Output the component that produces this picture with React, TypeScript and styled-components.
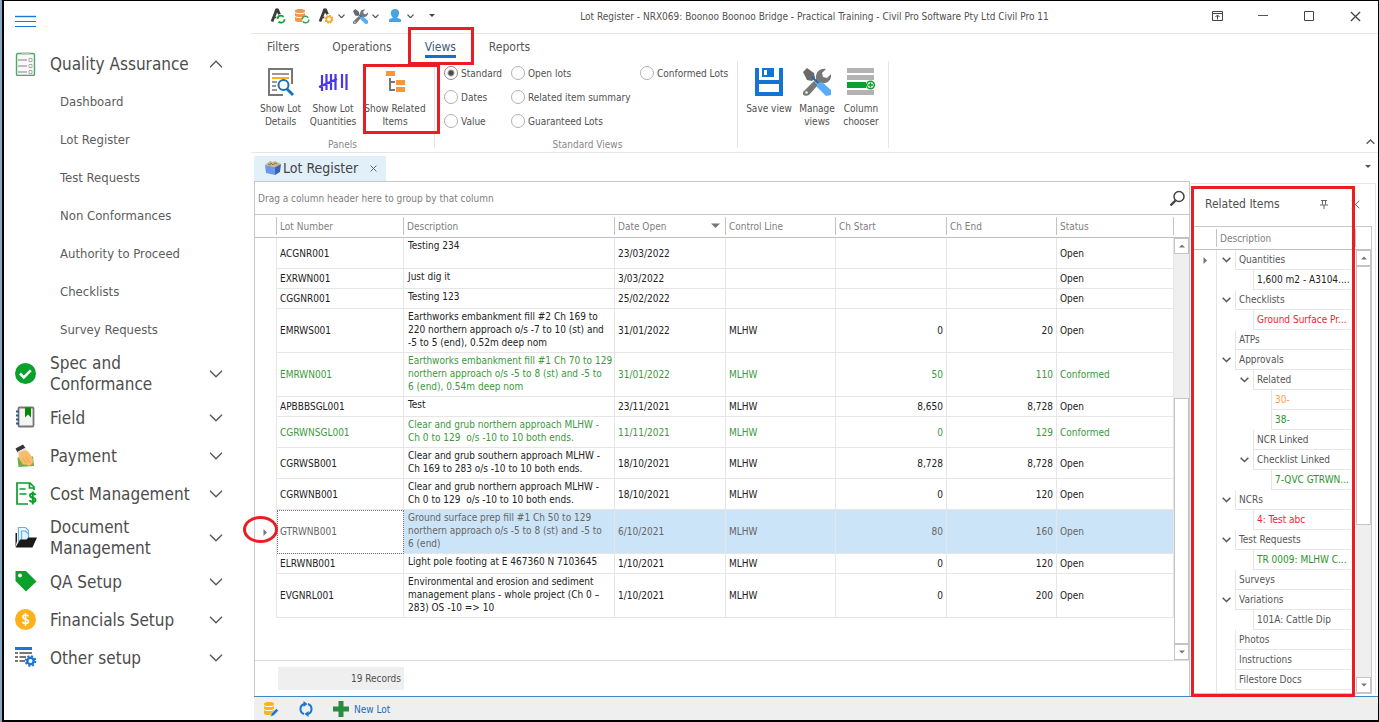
import React, { useState } from "react";
import styled, { createGlobalStyle } from "styled-components";

const GlobalStyle = createGlobalStyle`
  *, *::before, *::after { box-sizing: border-box; }
  body { margin: 0; background: #fff; }
  body, button, input, table {
    font-family: "DejaVu Sans Condensed", "DejaVu Sans", Tahoma, sans-serif;
    font-size: 10px;
    line-height: 13px;
    color: #505050;
  }
  button { background: none; border: 0; padding: 0; cursor: pointer; }
  a { color: inherit; text-decoration: none; }
  svg { display: block; flex: none; }
`;

const RED = "#eb1c24";
const LINE = "#e6e6e6";
const GREEN = "#3c993c";

/* ---------- frame ---------- */

const Frame = styled.div`
  border-left: 2px solid #86aac6;
  min-height: 100vh;
  display: flex;
`;
const Shell = styled.div`
  flex: 1;
  min-width: 0;
  display: flex;
  border: solid #000;
  border-width: 1px 1px 2px 2px;
`;
const Main = styled.main`
  flex: 1;
  min-width: 0;
  display: flex;
  flex-direction: column;
`;

/* ---------- navigation ---------- */

const Sidebar = styled.nav`
  width: 247px;
  flex: none;
  padding-top: 13px;
`;
const MenuButton = styled.button`
  display: block;
  margin-left: 11px;
  height: 16px;
  margin-bottom: 15px;
`;
const NavButton = styled.button<{ $tall?: boolean }>`
  display: flex;
  align-items: center;
  width: 100%;
  height: ${(p) => (p.$tall ? 50 : 38)}px;
  padding: 0 28px 0 10px;
  text-align: left;
  font-size: 17px;
  line-height: 21px;
  color: #4d4d4d;
`;
const NavIcon = styled.span`
  width: 36px;
  flex: none;
`;
const NavText = styled.span`
  flex: 1;
  white-space: pre-line;
`;
const NavLink = styled.a`
  display: flex;
  align-items: center;
  height: 38px;
  padding-left: 56px;
  font-size: 13px;
  line-height: 16px;
  color: #5c5c5c;
`;

/* ---------- title bar ---------- */

const TitleBar = styled.header`
  display: grid;
  grid-template-columns: 1fr auto 1fr;
  align-items: center;
  height: 33px;
  padding-bottom: 2px;
  border-bottom: 1px solid ${LINE};
`;
const QuickTools = styled.div`
  display: flex;
  align-items: center;
  gap: 8px;
  padding-left: 19px;
`;
const QuickButton = styled.button`
  display: flex;
  align-items: center;
  gap: 4px;
`;
const Title = styled.h1`
  margin: 0;
  font-size: 10px;
  font-weight: normal;
  line-height: 13px;
`;
const WindowButtons = styled.div`
  display: flex;
  justify-content: flex-end;
`;
const WindowButton = styled.button`
  width: 46px;
  height: 30px;
  display: grid;
  place-items: center;
`;

/* ---------- ribbon ---------- */

const RibbonTabs = styled.div`
  display: flex;
  height: 27px;
`;
const RibbonTab = styled.button<{ $active?: boolean }>`
  position: relative;
  padding: 5px 17px 0 16px;
  font-size: 12px;
  line-height: 16px;
  display: flex;
  flex-direction: column;
  color: ${(p) => (p.$active ? "#3c5a78" : "#555")};
  span {
    border-bottom: 3px solid ${(p) => (p.$active ? "#1a6fc0" : "transparent")};
  }
`;
const TabMarker = styled.i`
  position: absolute;
  inset: -7px -1px -4px;
  border: 3px solid ${RED};
`;
const Ribbon = styled.section`
  display: flex;
  height: 92px;
  padding-bottom: 4px;
  border-bottom: 1px solid ${LINE};
`;
const Group = styled.div<{ $wide?: boolean }>`
  display: flex;
  flex-direction: column;
  justify-content: space-between;
  padding: 0 6px 0 ${(p) => (p.$wide ? 9 : 6)}px;
  border-right: 1px solid ${LINE};
`;
const GroupBody = styled.div`
  display: flex;
  align-items: flex-start;
`;
const GroupLabel = styled.div`
  text-align: center;
  color: #888;
  height: 13px;
  margin-bottom: -3px;
`;
const BigButton = styled.button<{ $width: number }>`
  position: relative;
  width: ${(p) => p.$width}px;
  padding-top: 7px;
  display: flex;
  flex-direction: column;
  align-items: center;
  gap: 6px;
  text-align: center;
  white-space: pre;
`;
const ButtonMarker = styled.i`
  position: absolute;
  top: 3px;
  left: 1px;
  width: 77px;
  height: 70px;
  border: 3px solid ${RED};
`;
const RadioGrid = styled.div`
  display: grid;
  grid-template: repeat(3, 24px) / 67px 129px 91px;
  grid-auto-flow: column;
  align-items: center;
`;
const RadioLabel = styled.label`
  display: flex;
  align-items: center;
  gap: 3px;
  white-space: nowrap;
`;
const Radio = styled.input`
  appearance: none;
  width: 14px;
  height: 14px;
  margin: 0;
  border: 1px solid #b0b0b0;
  border-radius: 50%;
  &:checked {
    border-color: #8c8c8c;
    background: radial-gradient(circle, #4a4a4a 2px, #fff 4px);
  }
`;
const Collapse = styled.button`
  align-self: flex-end;
  margin: 0 3px 4px auto;
`;

/* ---------- document area ---------- */

const DocTabs = styled.div`
  display: flex;
  align-items: flex-end;
  justify-content: space-between;
  height: 28px;
  padding: 0 7px 0 3px;
`;
const DocTab = styled.div`
  display: flex;
  align-items: center;
  gap: 2px;
  height: 25px;
  padding: 0 9px 1px 11px;
  background: #e2f0fa;
  font-size: 14px;
  line-height: 18px;
  color: #444;
`;
const DocClose = styled.button`
  margin-left: 10px;
`;
const Workspace = styled.div`
  flex: 1;
  display: flex;
  padding-left: 3px;
`;
const GridPanel = styled.section`
  flex: 1;
  min-width: 0;
  display: flex;
  flex-direction: column;
  border: solid #c8c8c8;
  border-width: 1px 1px 0;
`;
const GroupBar = styled.div`
  display: flex;
  align-items: center;
  justify-content: space-between;
  height: 33px;
  padding: 0 3px;
  color: #808080;
  border-bottom: 1px solid #c8c8c8;
`;
const GridBody = styled.div`
  flex: 1;
  display: flex;
`;
const LotTable = styled.table`
  width: 100%;
  table-layout: fixed;
  border-collapse: separate;
  border-spacing: 0;
  align-self: flex-start;
`;
const HeadCell = styled.th`
  height: 23px;
  padding: 0 3px;
  text-align: left;
  font-weight: normal;
  color: #808080;
  border-bottom: 1px solid #c0c0c0;
  background: linear-gradient(#c4c4c4, #c4c4c4) right 0 top 2px / 1px 18px no-repeat;
`;
const HeadInner = styled.span`
  display: flex;
  align-items: center;
  justify-content: space-between;
  padding-right: 3px;
`;
const Row = styled.tr<{ $height: number; $color: string; $selected?: boolean }>`
  height: ${(p) => p.$height}px;
  color: ${(p) => p.$color};
  background: ${(p) => (p.$selected ? "#cce4f7" : "transparent")};
`;
const Cell = styled.td<{ $right?: boolean }>`
  padding: 0 3px;
  border-right: 1px solid ${LINE};
  border-bottom: 1px solid ${LINE};
  text-align: ${(p) => (p.$right ? "right" : "left")};
`;
const TextCell = styled(Cell)`
  padding: 1px 0 3px 4px;
  vertical-align: top;
  white-space: pre;
`;
const FocusCell = styled(Cell)`
  background: #fff;
  outline: 1px dotted #777;
  outline-offset: -1px;
`;
const IndicatorCell = styled.td`
  position: relative;
  padding: 0 0 0 8px;
  background: #fff;
  border-right: 1px solid ${LINE};
`;
const RowMarker = styled.i`
  position: absolute;
  left: -12px;
  top: 6px;
  width: 35px;
  height: 27px;
  border: 3px solid ${RED};
  border-radius: 50%;
`;
const ScrollColumn = styled.div`
  width: 15px;
  flex: none;
  display: flex;
  flex-direction: column;
`;
const ScrollHead = styled.div`
  height: 23px;
  border-bottom: 1px solid #c0c0c0;
`;
const ScrollTrack = styled.div`
  flex: 1;
  display: flex;
  flex-direction: column;
  background: #efefef;
`;
const ScrollButton = styled.button`
  height: 16px;
  display: grid;
  place-items: center;
  border: 1px solid #c4c4c4;
  background: #fff;
`;
const ScrollSpace = styled.div<{ $grow: number }>`
  flex: ${(p) => p.$grow} 0 0;
`;
const ScrollThumb = styled.div<{ $grow: number }>`
  flex: ${(p) => p.$grow} 0 0;
  background: #fff;
  border: 1px solid #c4c4c4;
`;
const GridFooter = styled.div`
  height: 36px;
  padding: 6px 23px;
  border-top: 1px solid #dcdcdc;
`;
const RecordCount = styled.div`
  width: 126px;
  height: 23px;
  padding: 5px 3px;
  text-align: right;
  background: #efefef;
`;

/* ---------- related items ---------- */

const RelatedPanel = styled.aside`
  position: relative;
  width: 185px;
  flex: none;
  margin: 2px 2px 2px 1px;
  padding: 0 3px 0 2px;
  display: flex;
  flex-direction: column;
  border: solid ${LINE};
  border-width: 1px 1px 0 0;
`;
const RelatedMarker = styled.i`
  position: absolute;
  top: 2px;
  left: 0;
  bottom: -3px;
  width: 164px;
  border: 3px solid ${RED};
`;
const RelatedHeader = styled.div`
  display: flex;
  align-items: center;
  height: 42px;
  padding: 0 12px 2px 12px;
`;
const RelatedTitle = styled.h2`
  flex: 1;
  margin: 0;
  font-size: 12px;
  line-height: 16px;
  font-weight: normal;
`;
const PinButton = styled.button`
  margin-right: 23px;
`;
const TreeBox = styled.div`
  flex: 1;
  display: flex;
  border: 1px solid #c8c8c8;
`;
const TreeMain = styled.div`
  flex: 1;
  min-width: 0;
  display: flex;
  flex-direction: column;
`;
const TreeHead = styled.div`
  display: flex;
  align-items: center;
  height: 23px;
  padding: 0 3px 0 26px;
  color: #808080;
  border-bottom: 1px solid #c0c0c0;
  background:
    linear-gradient(#c4c4c4, #c4c4c4) left 22px top 2px / 1px 18px no-repeat,
    linear-gradient(#c4c4c4, #c4c4c4) right 0 top 2px / 1px 18px no-repeat;
`;
const TreeList = styled.ul`
  flex: 1;
  margin: 0;
  padding: 0 5px 0 0;
  list-style: none;
  background: linear-gradient(${LINE}, ${LINE}) left 22px top 0 / 1px 100% no-repeat;
`;
const TreeRow = styled.li`
  display: flex;
  height: 20px;
`;
const TreeLead = styled.span`
  width: 23px;
  flex: none;
  display: flex;
  align-items: center;
  padding-left: 9px;
`;
const TreeToggle = styled.span<{ $level: number }>`
  width: ${(p) => 18 + p.$level * 18}px;
  flex: none;
  display: flex;
  align-items: center;
  justify-content: flex-end;
  padding-right: 4px;
`;
const TreeText = styled.span<{ $color?: string }>`
  flex: 1;
  min-width: 0;
  padding: 3px 0 3px 3px;
  border-left: 1px solid ${LINE};
  border-bottom: 1px solid ${LINE};
  color: ${(p) => p.$color || "#555"};
  white-space: nowrap;
`;

/* ---------- status bar ---------- */

const StatusBar = styled.footer`
  display: flex;
  align-items: center;
  gap: 20px;
  height: 24px;
  margin-left: 3px;
  padding: 1px 0 0 9px;
  background: #efefef;
  border-top: 1px solid #3f86c4;
`;
const StatusButton = styled.button`
  display: flex;
  align-items: center;
  gap: 5px;
  color: #1e6cb3;
`;

/* ---------- icons ---------- */

const Chevron = ({ up, size = 14, color = "#555", weight = 1.3 }: { up?: boolean; size?: number; color?: string; weight?: number }) => (
  <svg width={size} height={size / 2 + 1} viewBox="0 0 14 8" fill="none" stroke={color} strokeWidth={(weight * 14) / size}>
    <path d={up ? "M1 7.2 7 1.2l6 6" : "M1 .8l6 6 6-6"} />
  </svg>
);
const Triangle = ({ dir, size = 6, color = "#777" }: { dir: "up" | "down" | "right"; size?: number; color?: string }) => (
  <svg width={dir === "right" ? size / 2 + 1 : size} height={dir === "right" ? size : size / 2 + 1} viewBox={dir === "right" ? "0 0 4 8" : "0 0 8 4"} fill={color}>
    <path d={dir === "up" ? "M0 4 4 0l4 4z" : dir === "down" ? "M0 0h8L4 4z" : "M0 0l4 4-4 4z"} />
  </svg>
);
const Cross = ({ size = 12, weight = 1.4, color = "#444" }) => (
  <svg width={size} height={size} viewBox="0 0 12 12" stroke={color} strokeWidth={(weight * 12) / size}>
    <path d="M1 1l10 10M11 1 1 11" />
  </svg>
);

const navIcons: Record<string, React.ReactNode> = {
  quality: (
    <svg width="24" height="24" viewBox="0 0 24 24">
      <rect x="2.500" y="1.500" width="18" height="22" rx="1.5" fill="#f7f7f7" stroke="#4fa862" strokeWidth="1.4" />
      <path d="M7.500 1.500h8" stroke="#bbb" strokeWidth="2" />
      <path d="M4 8h9M4 14h9M4 20h9" stroke="#aaa" strokeWidth="1.4" />
      <g fill="#fff" stroke="#aaa"><path d="M15 6.500h3v3h-3zM15 12.500h3v3h-3zM15 18.500h3v3h-3z" /></g>
    </svg>
  ),
  check: (
    <svg width="24" height="24" viewBox="0 0 24 24">
      <circle cx="11.500" cy="11.500" r="10.500" fill="#0aa02c" />
      <path d="M6 11.500l3.800 3.800 7-7" fill="none" stroke="#fff" strokeWidth="2.600" />
    </svg>
  ),
  field: (
    <svg width="24" height="24" viewBox="0 0 24 24">
      <rect x="4.500" y="1.500" width="15" height="19" rx="1" fill="#f4f4f4" stroke="#777" strokeWidth="1.800" />
      <path d="M11 1.500h6v10l-3-3-3 3z" fill="#078807" />
      <path d="M2 5.500h3M2 9.500h3M2 13.500h3M2 17.500h3" stroke="#2c5f8a" strokeWidth="1.800" />
    </svg>
  ),
  payment: (
    <svg width="24" height="24" viewBox="0 0 24 24">
      <path d="M3.500 13.500L19 12.500l1 9.500-15.500 1z" fill="#69b046" />
      <path d="M5 8l7-2c3 2 6 6 7 10 0 3-1 5-3 5.500-2 .5-3 0-4-1-3 .5-4-.5-4.500-2.500C5 16 4 11 5 8z" fill="#f8bd6c" />
      <path d="M9 14l3 5M12 13l3 5" stroke="#e09a45" strokeWidth=".7" />
      <path d="M1.500 4.500L9 .5l2.500 3.500-8 4.500z" fill="#353535" />
      <path d="M3 8l8.500-4.500.8 1.500L4 9.500z" fill="#ddd" />
    </svg>
  ),
  cost: (
    <svg width="24" height="24" viewBox="0 0 24 24" fill="none" stroke="#0aa02c">
      <path d="M14 22H3V1h13l4 4v3" strokeWidth="1.700" />
      <path d="M15.500 1v5H20M5.500 7h6M5.500 12h7" strokeWidth="1.700" />
      <path d="M21.500 13c-1-2.300-5.500-2-5.500.5 0 3 5.500 1.500 5.500 4.500 0 2.600-5 2.600-6 .2M18.800 9.500v13" strokeWidth="2" />
    </svg>
  ),
  folder: (
    <svg width="24" height="24" viewBox="0 0 24 24">
      <path d="M4.500 1.500h7l3 3v11h-10z" fill="#f2f8ff" stroke="#5fb0ef" strokeWidth="1.200" />
      <path d="M7.500 5h4l3 3v7h-7z" fill="#e2f1ff" stroke="#5fb0ef" strokeWidth="1.200" />
      <path d="M1.500 21V7H3v8M1.500 21.500l4.500-8h6.500l2-2H23l-4.500 10z" fill="#1a1a1a" />
    </svg>
  ),
  tag: (
    <svg width="24" height="24" viewBox="0 0 24 24">
      <path d="M1.500 1H12l10.500 10.500L12 21.500 1.500 11z" fill="#0aa02c" />
      <circle cx="6" cy="5.500" r="1.900" fill="#fff" />
    </svg>
  ),
  coin: (
    <svg width="24" height="24" viewBox="0 0 24 24" fill="none">
      <circle cx="11.500" cy="11.500" r="10.500" fill="#ffb11b" />
      <path d="M14.500 8.500c-1-2-5.600-2-5.600.5 0 2.800 5.600 1.600 5.600 4.600 0 2.600-4.800 2.500-6 .4M11.500 5v13" stroke="#fff" strokeWidth="1.600" />
    </svg>
  ),
  other: (
    <svg width="24" height="24" viewBox="0 0 24 24">
      <path d="M1 1h17v3H1z" fill="#1976d2" />
      <path d="M1 6h3v2H1zM1 10h3v2H1zM1 14h3v2H1zM5.500 6H18v2H5.500zM5.500 10H12v2H5.500zM5.500 14H11v2H5.500z" fill="#777" />
      <circle cx="16.500" cy="15" r="3.200" fill="none" stroke="#1976d2" strokeWidth="2.400" />
      <circle cx="16.500" cy="15" r="4.800" fill="none" stroke="#1976d2" strokeWidth="2" strokeDasharray="2 1.770" />
    </svg>
  ),
};

const Compass = ({ badge }: { badge: string }) => (
  <svg width="16" height="16" viewBox="0 0 16 16" fill="none">
    <path d="M6.200 3L2 13.500M8 3l3.500 8" stroke="#3c3c3c" strokeWidth="2.800" />
    <path d="M3 9.500h7" stroke="#3c3c3c" strokeWidth="1.500" />
    <circle cx="7" cy="2.500" r="2.200" fill="#3c3c3c" />
    <circle cx="11" cy="11" r="5" fill="#fff" />
    <circle cx="11" cy="11.200" r="3.500" stroke={badge} strokeWidth="1.800" strokeDasharray={badge === "#f5a623" ? "1.800 .9" : "8 3"} />
    {badge === "#f5a623" && <circle cx="11" cy="11.200" r="2.600" stroke={badge} strokeWidth="1.400" />}
  </svg>
);
const Database = ({ edit }: { edit?: boolean }) => (
  <svg width="16" height="16" viewBox="0 0 16 16" fill="none">
    <path d="M1 2.500c0-2 10-2 10 0v10c0 2-10 2-10 0z" fill={edit ? "#ffb11b" : "#f79646"} />
    <path d="M1 4.500c1.500 1.500 8.500 1.500 10 0M1 8.500c1.500 1.500 8.500 1.500 10 0" stroke="#fff" />
    {edit ? (
      <path d="M7.500 15.500l.8-3 5-5 2.200 2.200-5 5z" fill="#1976d2" stroke="#efefef" strokeWidth=".6" />
    ) : (
      <circle cx="11.500" cy="11.500" r="3.300" fill="#fff" stroke="#3da35d" strokeWidth="1.500" strokeDasharray="8 2.400" />
    )}
  </svg>
);
const Tools = ({ size }: { size: number }) => (
  <svg width={size} height={size} viewBox="0 0 28 28">
    <path d="M0 24l11-11 4 4L6 27c-3 2-8 0-6-3z" fill="#777" />
    <path d="M13 12c-1-7 3-12 10-11l-4 4 1 4 4 1 4-4c1 6-4 10-9 9l-3 2-3-3z" fill="#777" />
    <circle cx="3.500" cy="24.500" r="1.200" fill="#fff" />
    <path d="M0 4l4-4 7 5 1 5-3 3-5-1z" fill="#6a6a6a" />
    <path d="M9 9l9 9" stroke="#1667b7" strokeWidth="2" />
    <path d="M14 19l1-4 4-1 9 8v5l-5 1z" fill="#58adf7" />
  </svg>
);
const Magnifier = () => (
  <svg width="17" height="17" viewBox="0 0 17 17" fill="none" stroke="#444">
    <circle cx="10" cy="6.500" r="5" strokeWidth="1.500" />
    <path d="M6.500 10.500L1.500 15.500" strokeWidth="2.400" />
  </svg>
);
const BoxIcon = () => (
  <svg width="16" height="16" viewBox="0 0 16 16">
    <path d="M0 5l10 2v8L1 13z" fill="#6d97e8" />
    <path d="M10 7l6-3-1 8-5 3z" fill="#3c63b4" />
    <path d="M0 5l5-4 3 1 2-1 6 3-6 3z" fill="#c9b58a" />
    <path d="M3 4l2 1 1-2 2 2 2-2 2 1" fill="none" stroke="#7d6a45" strokeWidth=".8" />
  </svg>
);
const DetailsIcon = () => (
  <svg width="28" height="28" viewBox="0 0 28 28" fill="none">
    <path d="M25 16V1H2v26h14" stroke="#777" strokeWidth="2" />
    <path d="M5 6h17M5 14h5M5 18h4M5 22h5" stroke="#777" strokeWidth="1.500" />
    <path d="M5 10h17" stroke="#ffb11b" strokeWidth="2" />
    <circle cx="16.500" cy="17" r="5" fill="#fff" stroke="#1472c4" strokeWidth="2" />
    <path d="M20 21l6 6" stroke="#1472c4" strokeWidth="2.800" />
  </svg>
);
const TallyIcon = () => (
  <svg width="30" height="28" viewBox="0 0 30 28" fill="none" stroke="#4a35f0" strokeWidth="2.200">
    <path d="M4 7v16M8.500 6v16M13 6v16M17.500 6v16M1 19l18-8M24 6v14M28.500 6v16" />
  </svg>
);
const TreeIcon = () => (
  <svg width="28" height="28" viewBox="0 0 28 28">
    <path d="M9 10v12h5M9 14h5" fill="none" stroke="#777" strokeWidth="2" />
    <path d="M5 3h9v5H5zM15 12h9v5h-9zM15 19h9v5h-9z" fill="#fb9637" />
  </svg>
);
const SaveIcon = () => (
  <svg width="28" height="28" viewBox="0 0 28 28">
    <path d="M0 0h4v12h20V0h4v28H0z" fill="#1474d4" />
    <path d="M7 0h12v9H7z" fill="#1474d4" />
    <path d="M9 2h3v5H9zM4 16h20v8H4z" fill="#fff" />
  </svg>
);
const ColumnIcon = () => (
  <svg width="28" height="28" viewBox="0 0 28 28">
    <path d="M0 0h27v5H0zM0 7h27v5H0zM0 22h27v5H0z" fill="#b3b3b3" />
    <path d="M0 14h19v6H0z" fill="#0aa02c" />
    <circle cx="23.500" cy="17" r="3.800" fill="#fff" stroke="#0aa02c" strokeWidth="1.500" />
    <path d="M23.500 14.500v5M21 17h5" stroke="#0aa02c" strokeWidth="1.500" />
  </svg>
);

/* ---------- data ---------- */

const subItems = ["Dashboard", "Lot Register", "Test Requests", "Non Conformances", "Authority to Proceed", "Checklists", "Survey Requests"];
const navItems = [
  { icon: "check", text: "Spec and\nConformance", tall: true },
  { icon: "field", text: "Field" },
  { icon: "payment", text: "Payment" },
  { icon: "cost", text: "Cost Management" },
  { icon: "folder", text: "Document\nManagement", tall: true },
  { icon: "tag", text: "QA Setup" },
  { icon: "coin", text: "Financials Setup" },
  { icon: "other", text: "Other setup" },
];
const ribbonTabs = ["Filters", "Operations", "Views", "Reports"];
const views = ["Standard", "Dates", "Value", "Open lots", "Related item summary", "Guaranteed Lots", "Conformed Lots"];

type Lot = { id: string; text: string; date: string; line?: string; start?: string; end?: string; status: string; height: number };
const lots: Lot[] = [
  { id: "ACGNR001", text: "Testing 234", date: "23/03/2022", status: "Open", height: 31 },
  { id: "EXRWN001", text: "Just dig it", date: "3/03/2022", status: "Open", height: 20 },
  { id: "CGGNR001", text: "Testing 123", date: "25/02/2022", status: "Open", height: 20 },
  { id: "EMRWS001", text: "Earthworks embankment fill #2 Ch 169 to\n220 northern approach o/s -7 to 10 (st) and\n-5 to 5 (end), 0.52m deep nom", date: "31/01/2022", line: "MLHW", start: "0", end: "20", status: "Open", height: 44 },
  { id: "EMRWN001", text: "Earthworks embankment fill #1 Ch 70 to 129\nnorthern approach o/s -5 to 8 (st) and -5 to\n6 (end), 0.54m deep nom", date: "31/01/2022", line: "MLHW", start: "50", end: "110", status: "Conformed", height: 44 },
  { id: "APBBBSGL001", text: "Test", date: "23/11/2021", line: "MLHW", start: "8,650", end: "8,728", status: "Open", height: 20 },
  { id: "CGRWNSGL001", text: "Clear and grub northern approach MLHW -\nCh 0 to 129  o/s -10 to 10 both ends.", date: "11/11/2021", line: "MLHW", start: "0", end: "129", status: "Conformed", height: 31 },
  { id: "CGRWSB001", text: "Clear and grub southern approach MLHW -\nCh 169 to 283 o/s -10 to 10 both ends.", date: "18/10/2021", line: "MLHW", start: "8,728", end: "8,728", status: "Open", height: 31 },
  { id: "CGRWNB001", text: "Clear and grub northern approach MLHW -\nCh 0 to 129  o/s -10 to 10 both ends.", date: "18/10/2021", line: "MLHW", start: "0", end: "120", status: "Open", height: 31 },
  { id: "GTRWNB001", text: "Ground surface prep fill #1 Ch 50 to 129\nnorthern approach o/s -5 to 8 (st) and -5 to\n6 (end)", date: "6/10/2021", line: "MLHW", start: "80", end: "160", status: "Open", height: 44 },
  { id: "ELRWNB001", text: "Light pole footing at E 467360 N 7103645", date: "1/10/2021", line: "MLHW", start: "0", end: "120", status: "Open", height: 20 },
  { id: "EVGNRL001", text: "Environmental and erosion and sediment\nmanagement plans - whole project (Ch 0 –\n283) OS -10 => 10", date: "1/10/2021", line: "MLHW", start: "0", end: "200", status: "Open", height: 44 },
];

type Node = { text: string; level: number; open?: boolean; color?: string };
const tree: Node[] = [
  { text: "Quantities", level: 0, open: true },
  { text: "1,600 m2 - A3104....", level: 1, color: "#222" },
  { text: "Checklists", level: 0, open: true },
  { text: "Ground Surface Pr...", level: 1, color: "#f5232d" },
  { text: "ATPs", level: 0 },
  { text: "Approvals", level: 0, open: true },
  { text: "Related", level: 1, open: true },
  { text: "30-", level: 2, color: "#f9a03f" },
  { text: "38-", level: 2, color: "#2c932c" },
  { text: "NCR Linked", level: 1 },
  { text: "Checklist Linked", level: 1, open: true },
  { text: "7-QVC GTRWN...", level: 2, color: "#2c932c" },
  { text: "NCRs", level: 0, open: true },
  { text: "4: Test abc", level: 1, color: "#f5232d" },
  { text: "Test Requests", level: 0, open: true },
  { text: "TR 0009: MLHW C...", level: 1, color: "#2c932c" },
  { text: "Surveys", level: 0 },
  { text: "Variations", level: 0, open: true },
  { text: "101A: Cattle Dip", level: 1 },
  { text: "Photos", level: 0 },
  { text: "Instructions", level: 0 },
  { text: "Filestore Docs", level: 0 },
];

/* ---------- parts ---------- */

const Scrollbar = ({ before, thumb, after }: { before: number; thumb: number; after: number }) => (
  <ScrollTrack>
    <ScrollButton aria-label="Scroll up"><Triangle dir="up" /></ScrollButton>
    <ScrollSpace $grow={before} />
    <ScrollThumb $grow={thumb} />
    <ScrollSpace $grow={after} />
    <ScrollButton aria-label="Scroll down"><Triangle dir="down" /></ScrollButton>
  </ScrollTrack>
);

const Navigation = () => (
  <Sidebar>
    <MenuButton aria-label="Menu">
      <svg width="21" height="16" viewBox="0 0 21 16" stroke="#1976d2">
        <path d="M0 2.500h21" strokeWidth="1.400" />
        <path d="M0 7.500h21M0 12.500h21" />
      </svg>
    </MenuButton>
    <NavButton>
      <NavIcon>{navIcons.quality}</NavIcon>
      <NavText>Quality Assurance</NavText>
      <Chevron up />
    </NavButton>
    {subItems.map((s) => <NavLink key={s} href="#">{s}</NavLink>)}
    {navItems.map((n) => (
      <NavButton key={n.icon} $tall={n.tall}>
        <NavIcon>{navIcons[n.icon]}</NavIcon>
        <NavText>{n.text}</NavText>
        <Chevron />
      </NavButton>
    ))}
  </Sidebar>
);

const TopBar = () => (
  <TitleBar>
    <QuickTools>
      <QuickButton aria-label="Refresh project"><Compass badge="#0aa02c" /></QuickButton>
      <QuickButton aria-label="Refresh data"><Database /></QuickButton>
      <QuickButton aria-label="Project settings"><Compass badge="#f5a623" /><Chevron size={7} /></QuickButton>
      <QuickButton aria-label="Tools"><Tools size={15} /><Chevron size={7} /></QuickButton>
      <QuickButton aria-label="User">
        <svg width="16" height="14" viewBox="0 0 16 14" fill="#4aa3df">
          <path d="M2 13v-2c0-1 2-2 4-2-4-5-2-9 2-9s6 4 2 9c2 0 4 1 4 2v2z" />
        </svg>
        <Chevron size={7} />
      </QuickButton>
      <QuickButton aria-label="Customise"><svg width="18" height="4" viewBox="0 0 18 4" fill="#444"><path d="M7 0h6l-3 3z" /></svg></QuickButton>
    </QuickTools>
    <Title>Lot Register - NRX069: Boonoo Boonoo Bridge - Practical Training - Civil Pro Software Pty Ltd Civil Pro 11</Title>
    <WindowButtons>
      <WindowButton aria-label="Ribbon display">
        <svg width="11" height="10" viewBox="0 0 11 10" fill="none" stroke="#444"><path d="M.5.5h10v9H.5zM.5 2.500h10M5.500 8.500v-4M3.500 6l2-2 2 2" /></svg>
      </WindowButton>
      <WindowButton aria-label="Minimise">
        <svg width="10" height="2" viewBox="0 0 10 2"><path d="M0 0h10v1H0z" fill="#555" /></svg>
      </WindowButton>
      <WindowButton aria-label="Maximise">
        <svg width="10" height="10" viewBox="0 0 10 10"><path d="M.5.5h9v9h-9z" fill="none" stroke="#444" /></svg>
      </WindowButton>
      <WindowButton aria-label="Close"><Cross size={11} weight={1.3} /></WindowButton>
    </WindowButtons>
  </TitleBar>
);

const RibbonBar = () => {
  const [view, setView] = useState("Standard");
  return (
    <>
      <RibbonTabs>
        {ribbonTabs.map((t) => (
          <RibbonTab key={t} $active={t === "Views"}>
            <span>{t}</span>
            {t === "Views" && <TabMarker />}
          </RibbonTab>
        ))}
      </RibbonTabs>
      <Ribbon>
        <Group>
          <GroupBody>
            <BigButton $width={47}><DetailsIcon />{"Show Lot\nDetails"}</BigButton>
            <BigButton $width={58}><TallyIcon />{"Show Lot\nQuantities"}</BigButton>
            <BigButton $width={66}><TreeIcon />{"Show Related\nItems"}<ButtonMarker /></BigButton>
          </GroupBody>
          <GroupLabel>Panels</GroupLabel>
        </Group>
        <Group $wide>
          <RadioGrid role="radiogroup" aria-label="Standard Views">
            {views.map((v) => (
              <RadioLabel key={v}>
                <Radio type="radio" name="view" checked={view === v} onChange={() => setView(v)} />
                {v}
              </RadioLabel>
            ))}
          </RadioGrid>
          <GroupLabel>Standard Views</GroupLabel>
        </Group>
        <Group>
          <GroupBody>
            <BigButton $width={50}><SaveIcon />Save view</BigButton>
            <BigButton $width={46}><Tools size={28} />{"Manage\nviews"}</BigButton>
            <BigButton $width={42}><ColumnIcon />{"Column\nchooser"}</BigButton>
          </GroupBody>
        </Group>
        <Collapse aria-label="Collapse ribbon"><Chevron up size={9} /></Collapse>
      </Ribbon>
    </>
  );
};

const LotGrid = () => (
  <GridPanel>
    <GroupBar>
      Drag a column header here to group by that column
      <button aria-label="Search"><Magnifier /></button>
    </GroupBar>
    <GridBody>
      <LotTable>
        <colgroup>
          <col width="22" /><col width="127" /><col /><col width="111" /><col width="110" /><col width="111" /><col width="110" /><col width="117" />
        </colgroup>
        <thead>
          <tr>
            <HeadCell aria-label="Row" />
            <HeadCell>Lot Number</HeadCell>
            <HeadCell>Description</HeadCell>
            <HeadCell><HeadInner>Date Open <Triangle dir="down" size={9} /></HeadInner></HeadCell>
            <HeadCell>Control Line</HeadCell>
            <HeadCell>Ch Start</HeadCell>
            <HeadCell>Ch End</HeadCell>
            <HeadCell>Status</HeadCell>
          </tr>
        </thead>
        <tbody>
          {lots.map((l) => {
            const selected = l.id === "GTRWNB001";
            const IdCell = selected ? FocusCell : Cell;
            return (
              <Row key={l.id} $height={l.height} $selected={selected} $color={selected ? "#666" : l.status === "Conformed" ? GREEN : "#222"}>
                <IndicatorCell>{selected && <><Triangle dir="right" size={7} /><RowMarker /></>}</IndicatorCell>
                <IdCell>{l.id}</IdCell>
                <TextCell>{l.text}</TextCell>
                <Cell>{l.date}</Cell>
                <Cell>{l.line}</Cell>
                <Cell $right>{l.start}</Cell>
                <Cell $right>{l.end}</Cell>
                <Cell>{l.status}</Cell>
              </Row>
            );
          })}
        </tbody>
      </LotTable>
      <ScrollColumn>
        <ScrollHead />
        <Scrollbar before={144} thumb={245} after={0} />
      </ScrollColumn>
    </GridBody>
    <GridFooter><RecordCount>19 Records</RecordCount></GridFooter>
  </GridPanel>
);

const Related = () => (
  <RelatedPanel>
    <RelatedHeader>
      <RelatedTitle>Related Items</RelatedTitle>
      <PinButton aria-label="Pin">
        <svg width="8" height="9" viewBox="0 0 8 9" fill="none" stroke="#666"><path d="M1 .5h6M2.500.5v4M5.500.5v4M0 5h8M4 5v4" /></svg>
      </PinButton>
      <button aria-label="Close panel"><Cross size={9} weight={1} color="#666" /></button>
    </RelatedHeader>
    <TreeBox>
      <TreeMain>
        <TreeHead>Description</TreeHead>
        <TreeList>
          {tree.map((n, i) => (
            <TreeRow key={n.text}>
              <TreeLead>{i === 0 && <Triangle dir="right" size={7} />}</TreeLead>
              <TreeToggle $level={n.level}>{n.open && <Chevron size={9} weight={1.5} />}</TreeToggle>
              <TreeText $color={n.color}>{n.text}</TreeText>
            </TreeRow>
          ))}
        </TreeList>
      </TreeMain>
      <ScrollColumn>
        <ScrollHead />
        <Scrollbar before={0} thumb={257} after={152} />
      </ScrollColumn>
    </TreeBox>
    <RelatedMarker />
  </RelatedPanel>
);

export default function App() {
  return (
    <Frame>
      <GlobalStyle />
      <Shell>
        <Navigation />
        <Main>
          <TopBar />
          <RibbonBar />
          <DocTabs>
            <DocTab>
              <BoxIcon />
              Lot Register
              <DocClose aria-label="Close tab"><Cross size={7} weight={1} color="#666" /></DocClose>
            </DocTab>
            <svg width="6" height="16" viewBox="0 0 6 16" fill="#555"><path d="M0 0h6L3 3z" /></svg>
          </DocTabs>
          <Workspace>
            <LotGrid />
            <Related />
          </Workspace>
          <StatusBar>
            <StatusButton aria-label="Edit data"><Database edit /></StatusButton>
            <StatusButton aria-label="Refresh">
              <svg width="14" height="16" viewBox="0 0 14 16" fill="none" stroke="#1976d2" strokeWidth="2">
                <path d="M5 13A5.300 5.300 0 0 1 5 3M9 3a5.300 5.300 0 0 1 0 10" />
                <path d="M4.500 0l4 3-4 3zM9.500 10l-4 3 4 3z" fill="#1976d2" stroke="none" />
              </svg>
            </StatusButton>
            <StatusButton>
              <svg width="16" height="16" viewBox="0 0 16 16"><path d="M5.500 0h5v5.500H16v5h-5.500V16h-5v-5.500H0v-5h5.500z" fill="#2a8c3e" /></svg>
              New Lot
            </StatusButton>
          </StatusBar>
        </Main>
      </Shell>
    </Frame>
  );
}
